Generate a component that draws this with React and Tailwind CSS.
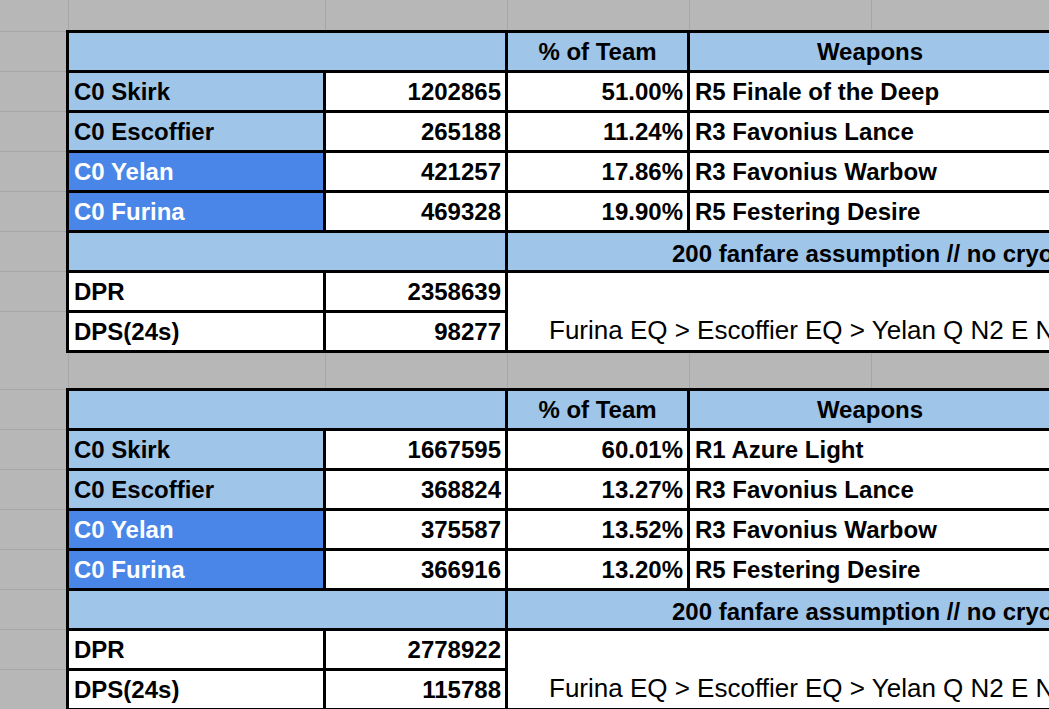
import React from "react";

const FONT = { fontFamily: '"Liberation Sans", Arial, sans-serif' };

function Band({ h }) {
  return (
    <div className={`flex shrink-0 ${h}`}>
      <div className="w-[69px] shrink-0 border-r border-[#a6a6a6]" />
      <div className="w-[257px] shrink-0 border-r border-[#a6a6a6]" />
      <div className="w-[182px] shrink-0 border-r border-[#a6a6a6]" />
      <div className="w-[182px] shrink-0 border-r border-[#a6a6a6]" />
      <div className="w-[182px] shrink-0 border-r border-[#a6a6a6]" />
      <div className="flex-1" />
    </div>
  );
}

function LeftCol() {
  return (
    <div className="w-[66px] shrink-0 pt-px">
      {Array.from({ length: 8 }).map((_, i) => (
        <div key={i} className="h-10 border-t border-[#a6a6a6]" />
      ))}
    </div>
  );
}

const cell =
  "flex items-end whitespace-nowrap overflow-hidden leading-[27px] text-[24px]";

function Table({ rows, dpr, dps }) {
  return (
    <div className="grid grid-cols-[254px_179px_179px_360px] grid-rows-[repeat(8,37px)] gap-[3px] p-[3px] bg-black shrink-0">
      {/* header */}
      <div className={`${cell} pb-[5px] col-span-2 bg-[#9fc5e8]`} />
      <div className={`${cell} pb-[5px] justify-center bg-[#9fc5e8] font-bold text-black`}>% of Team</div>
      <div className={`${cell} pb-[5px] justify-center bg-[#9fc5e8] font-bold text-black`}>Weapons</div>
      {rows.map((r) => (
        <React.Fragment key={r.name}>
          <div
            className={`${cell} pb-[5px] pl-[5px] font-bold ${
              r.dark ? "bg-[#4a86e8] text-white" : "bg-[#9fc5e8] text-black"
            }`}
          >
            {r.name}
          </div>
          <div className={`${cell} pb-[5px] justify-end pr-[4px] bg-white font-bold text-black`}>{r.dmg}</div>
          <div className={`${cell} pb-[5px] justify-end pr-[4px] bg-white font-bold text-black`}>{r.pct}</div>
          <div className={`${cell} pb-[5px] pl-[5px] bg-white font-bold text-black`}>{r.weapon}</div>
        </React.Fragment>
      ))}
      {/* fanfare row */}
      <div className={`${cell} col-span-2 bg-[#9fc5e8]`} />
      <div className={`${cell} pb-[3px] col-span-2 pl-[164px] bg-[#9fc5e8] font-bold text-black`}>
        200 fanfare assumption // no cryo res shred
      </div>
      {/* DPR */}
      <div className={`${cell} pb-[5px] pl-[5px] bg-white font-bold text-black`}>DPR</div>
      <div className={`${cell} pb-[5px] justify-end pr-[4px] bg-white font-bold text-black`}>{dpr}</div>
      <div className="col-span-2 row-span-2 flex items-end pb-[6px] pl-[41px] whitespace-nowrap overflow-hidden leading-[28px] text-[26px] bg-white text-black">
        Furina EQ &gt; Escoffier EQ &gt; Yelan Q N2 E N2 E &gt; Skirk E Q
      </div>
      {/* DPS */}
      <div className={`${cell} pb-[5px] pl-[5px] bg-white font-bold text-black`}>DPS(24s)</div>
      <div className={`${cell} pb-[5px] justify-end pr-[4px] bg-white font-bold text-black`}>{dps}</div>
    </div>
  );
}

const t1 = [
  { name: "C0 Skirk", dmg: "1202865", pct: "51.00%", weapon: "R5 Finale of the Deep" },
  { name: "C0 Escoffier", dmg: "265188", pct: "11.24%", weapon: "R3 Favonius Lance" },
  { name: "C0 Yelan", dmg: "421257", pct: "17.86%", weapon: "R3 Favonius Warbow", dark: true },
  { name: "C0 Furina", dmg: "469328", pct: "19.90%", weapon: "R5 Festering Desire", dark: true },
];

const t2 = [
  { name: "C0 Skirk", dmg: "1667595", pct: "60.01%", weapon: "R1 Azure Light" },
  { name: "C0 Escoffier", dmg: "368824", pct: "13.27%", weapon: "R3 Favonius Lance" },
  { name: "C0 Yelan", dmg: "375587", pct: "13.52%", weapon: "R3 Favonius Warbow", dark: true },
  { name: "C0 Furina", dmg: "366916", pct: "13.20%", weapon: "R5 Festering Desire", dark: true },
];

export default function App() {
  return (
    <div
      className="w-[1049px] h-[709px] overflow-hidden bg-[#b7b7b7] flex flex-col"
      style={FONT}
    >
      <Band h="h-[30px]" />
      <div className="flex shrink-0">
        <LeftCol />
        <Table rows={t1} dpr="2358639" dps="98277" />
      </div>
      <Band h="h-[35px]" />
      <div className="flex shrink-0">
        <LeftCol />
        <Table rows={t2} dpr="2778922" dps="115788" />
      </div>
    </div>
  );
}
